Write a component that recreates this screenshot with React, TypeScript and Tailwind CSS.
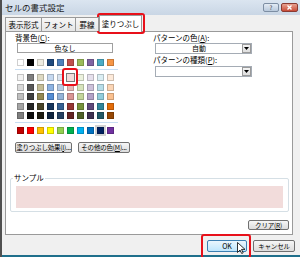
import React from "react";

const theme = ["#FFFFFF", "#000000", "#EEECE1", "#1F497D", "#4F81BD", "#C0504D", "#9BBB59", "#8064A2", "#4BACC6", "#F79646"];
const tints = [
  ["#F2F2F2", "#7F7F7F", "#DDD9C3", "#C6D9F0", "#DBE5F1", "#F2DCDB", "#EBF1DD", "#E5E0EC", "#DBEEF3", "#FDEADA"],
  ["#D8D8D8", "#595959", "#C4BD97", "#8DB3E2", "#B8CCE4", "#E5B9B7", "#D7E3BC", "#CCC1D9", "#B7DDE8", "#FBD5B5"],
  ["#BFBFBF", "#3F3F3F", "#938953", "#548DD4", "#95B3D7", "#D99694", "#C3D69B", "#B2A2C7", "#92CDDC", "#FAC08F"],
  ["#A5A5A5", "#262626", "#494429", "#17365D", "#366092", "#953734", "#76923C", "#5F497A", "#31859B", "#E36C09"],
  ["#7F7F7F", "#0C0C0C", "#1D1B10", "#0F243E", "#244061", "#632423", "#4F6128", "#3F3151", "#205867", "#974806"],
];
const standard = ["#C00000", "#FF0000", "#FFC000", "#FFFF00", "#92D050", "#00B050", "#00B0F0", "#0070C0", "#002060", "#7030A0"];

function Swatch({ c, sel, hl }: { c: string; sel?: boolean; hl?: boolean }) {
  if (sel) {
    return (
      <div className="w-[7px] h-[7px] relative">
        <div className="absolute -left-[1px] -top-[1px] w-[9px] h-[9px] border border-[#7a7a7a]" style={{ background: c }} />
      </div>
    );
  }
  return (
    <div
      className={
        "w-[7px] h-[7px] border border-[#00000030] " +
        (hl ? "outline outline-2 outline-[#d4d4d4]" : "")
      }
      style={{ background: c }}
    />
  );
}

function Btn({ children, className = "" }: { children: React.ReactNode; className?: string }) {
  return (
    <div
      className={
        "flex items-center justify-center whitespace-nowrap border border-[#707070] rounded-[2px] bg-gradient-to-b from-[#f6f6f6] to-[#dcdcdc] text-[6.5px] leading-none tracking-[-0.2px] " +
        className
      }
    >
      {children}
    </div>
  );
}

function Dropdown({ text }: { text?: string }) {
  return (
    <div className="w-[97px] h-[11px] border border-[#a5acb5] bg-white flex items-center">
      <div className="flex-1 text-center text-[7px] leading-none">{text}</div>
      <div className="w-[9px] h-[9px] border border-[#9a9a9a] bg-gradient-to-b from-[#f4f4f4] to-[#dedede] flex items-center justify-center">
        <svg width="5" height="3" viewBox="0 0 5 3">
          <path d="M0 0h5L2.5 3z" fill="#000" />
        </svg>
      </div>
    </div>
  );
}

export default function App() {
  return (
    <div
      className="w-[300px] h-[257px] relative overflow-hidden bg-[#f0f0f0] text-black flex flex-col border-l-2 border-[#505050]"
      style={{ fontFamily: '"Noto Sans CJK JP", "Noto Sans", sans-serif' }}
    >
      {/* title bar */}
      <div className="h-[15px] shrink-0 flex items-center pl-[3px] pr-[2px] bg-gradient-to-b from-[#dbe5f0] to-[#c9d6e5]">
        <span className="text-[8.5px] leading-none text-[#1a1a1a]">セルの書式設定</span>
        <div className="ml-auto flex items-center gap-[2px]">
          <div className="w-[16px] h-[9px] rounded-[2px] border border-[#7d8ea3] bg-gradient-to-b from-[#e3ebf4] to-[#b9c9dc] flex items-center justify-center text-[6px] leading-none text-[#333]">?</div>
          <div className="w-[17px] h-[9px] rounded-[2px] border border-[#8a3a32] bg-gradient-to-b from-[#e8a191] to-[#c84a37] flex items-center justify-center">
            <svg width="5" height="5" viewBox="0 0 5 5">
              <path d="M0.5 0.5l4 4M4.5 0.5l-4 4" stroke="#fff" strokeWidth="1.4" />
            </svg>
          </div>
        </div>
      </div>

      {/* tabs */}
      <div className="h-[16px] shrink-0 flex items-end pl-[3px] text-[7.5px] leading-none relative z-10">
        <div className="w-[37px] h-[14px] border border-[#9a9a9a] border-b-0 bg-gradient-to-b from-[#f7f7f7] to-[#e6e6e6] flex items-center justify-center">表示形式</div>
        <div className="w-[34px] h-[14px] border border-[#9a9a9a] border-b-0 border-l-0 bg-gradient-to-b from-[#f7f7f7] to-[#e6e6e6] flex items-center justify-center">フォント</div>
        <div className="w-[23px] h-[14px] border border-[#9a9a9a] border-b-0 border-l-0 bg-gradient-to-b from-[#f7f7f7] to-[#e6e6e6] flex items-center justify-center">罫線</div>
        <div className="w-[43px] h-[17px] -mb-[1px] border border-[#9a9a9a] border-b-0 bg-white flex items-center justify-center">塗りつぶし</div>
      </div>

      {/* panel */}
      <div className="ml-[3px] w-[288px] h-[204px] shrink-0 border border-[#9a9a9a] bg-white flex flex-col">
        <div className="flex h-[121px]">
          {/* left */}
          <div className="w-[146px] flex flex-col pt-[1px]">
            <div className="pl-[9px] h-[9px] text-[7.5px] leading-[9px]">背景色(<span className="underline">C</span>):</div>
            <div className="ml-[11px] mt-[1px] w-[96px] h-[10px] border border-[#a0a0a0] flex items-center justify-center text-[7px] leading-none">色なし</div>
            <div className="ml-[11px] mt-[6px] flex gap-x-[3px]">
              {theme.map((c, i) => (
                <Swatch key={i} c={c} />
              ))}
            </div>
            <div className="ml-[9px] mt-[3px] w-[103px] h-[1px] bg-[#c7ddf2]" />
            <div className="ml-[11px] mt-[4px] flex flex-col gap-y-[2.5px]">
              {tints.map((row, r) => (
                <div key={r} className="flex gap-x-[3px]">
                  {row.map((c, i) => (
                    <Swatch key={i} c={c} sel={r === 0 && i === 5} />
                  ))}
                </div>
              ))}
            </div>
            <div className="ml-[9px] mt-[3px] w-[103px] h-[1px] bg-[#c7ddf2]" />
            <div className="ml-[11px] mt-[4px] flex gap-x-[3px]">
              {standard.map((c, i) => (
                <Swatch key={i} c={c} hl={i === 8} />
              ))}
            </div>
          </div>
          {/* right */}
          <div className="flex flex-col pt-[1px] pl-[1px]">
            <div className="h-[9px] text-[7.5px] leading-[9px]">パターンの色(<span className="underline">A</span>):</div>
            <div className="ml-[2px] mt-[1px]">
              <Dropdown text="自動" />
            </div>
            <div className="mt-[1px] h-[9px] text-[7.5px] leading-[9px]">パターンの種類(<span className="underline">P</span>):</div>
            <div className="ml-[2px] mt-[2px]">
              <Dropdown />
            </div>
          </div>
        </div>

        <div className="flex gap-[6px] ml-[9px] mt-[-11px]">
          <Btn className="w-[57px] h-[11px]">塗りつぶし効果(<span className="underline">I</span>)...</Btn>
          <Btn className="w-[52px] h-[11px]">その他の色(<span className="underline">M</span>)...</Btn>
        </div>

        {/* sample group */}
        <div className="ml-[4px] mt-[25px] w-[279px] h-[34px] border border-[#d5dfe5] rounded-[2px] relative">
          <div className="absolute left-[2px] -top-[6px] px-[1px] bg-white text-[7.5px] leading-[9px]">サンプル</div>
          <div className="mx-[5px] mt-[7px] h-[22px] bg-[#f2dcdb]" />
        </div>

        <div className="self-end mr-[3px] mt-[8px]">
          <Btn className="w-[41px] h-[10px]">クリア(<span className="underline">R</span>)</Btn>
        </div>
      </div>

      {/* bottom buttons */}
      <div className="flex justify-end gap-[6px] pr-[5px] pt-[5px]">
        <div className="w-[40px] h-[12px] border border-[#3c7fb1] rounded-[2px] bg-gradient-to-b from-[#eaf6fd] to-[#bee6fd] flex items-center justify-center text-[7px] leading-none">OK</div>
        <Btn className="w-[42px] h-[12px]">キャンセル</Btn>
      </div>

      <div className="absolute left-0 right-0 bottom-0 h-[2px] bg-[#1f6f8b]" />

      {/* red highlights */}
      <div className="absolute left-[95px] top-[13px] w-[48px] h-[21px] border-2 border-[#e8101a] rounded-[3px]" />
      <div className="absolute left-[60px] top-[68px] w-[16px] h-[18px] border-2 border-[#e8101a] rounded-[3px]" />
      <div className="absolute left-[199px] top-[234px] w-[50px] h-[25px] border-2 border-[#e8101a] rounded-[3px]" />

      {/* cursor */}
      <svg className="absolute left-[235px] top-[242px]" width="8" height="12" viewBox="0 0 8 12">
        <path d="M0.5 0.5v10l2.5-2.5 1.7 3.5 1.5-0.7-1.7-3.4h3.5z" fill="#fff" stroke="#000" strokeWidth="0.8" />
      </svg>
    </div>
  );
}
